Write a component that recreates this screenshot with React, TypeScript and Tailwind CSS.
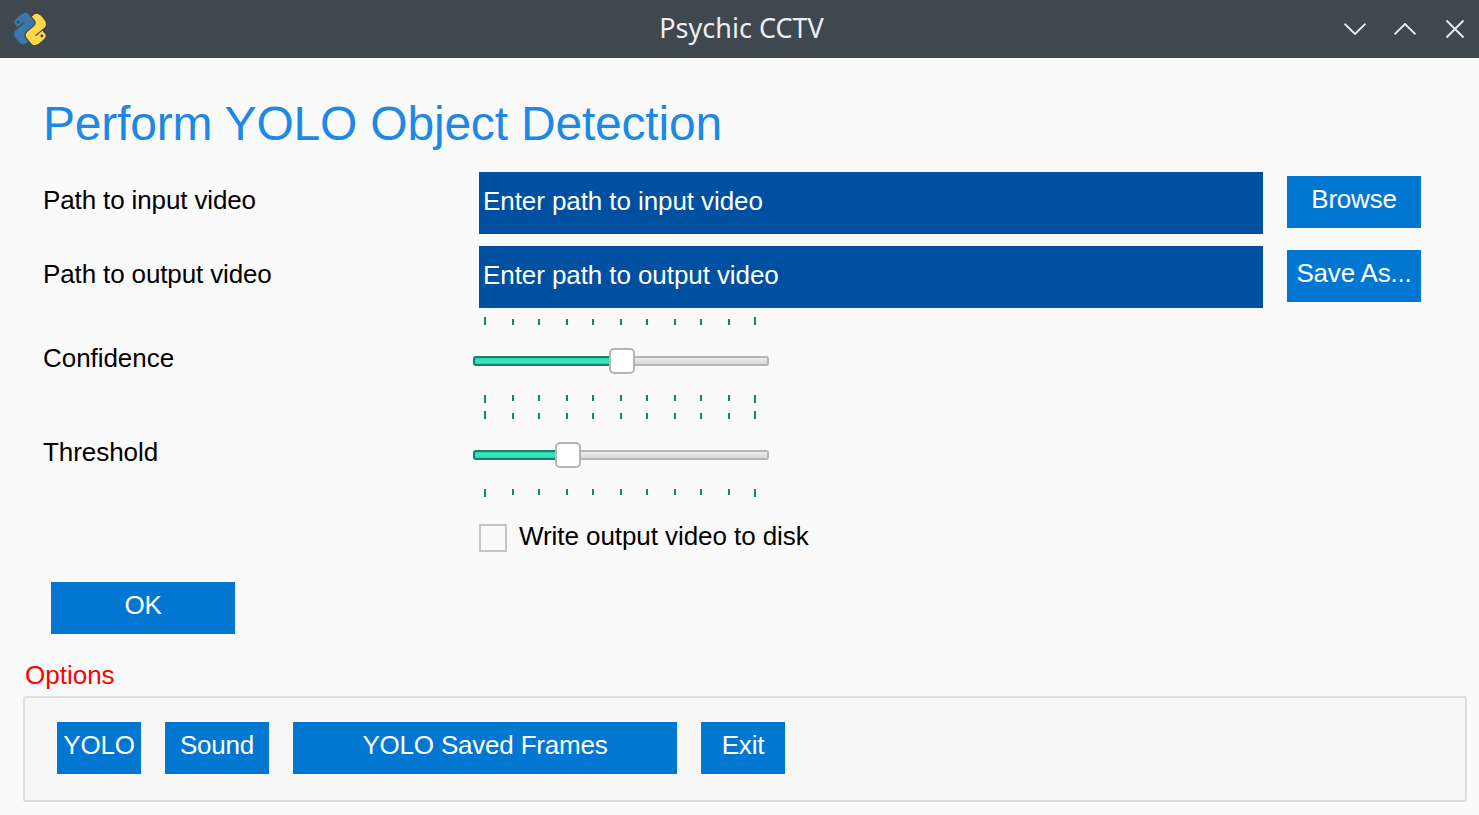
const ticks = [0, 1, 2, 3, 4, 5, 6, 7, 8, 9, 10];
const gapClass = ["ml-0", "ml-[26px]", "ml-[24px]"];

function Ticks({ className, align }: { className: string; align: "top" | "bottom" }) {
  return (
    <div className={`flex h-2 w-[272px] ${align === "top" ? "items-start" : "items-end"} ${className}`}>
      {ticks.map((t) => (
        <div
          key={t}
          className={`w-0.5 bg-[#0f8a6e] ${t === 0 || t === 10 ? "h-2" : "h-1.5"} ${
            t === 0 ? gapClass[0] : t % 2 === 1 ? gapClass[1] : gapClass[2]
          }`}
        />
      ))}
    </div>
  );
}

function Slider({ fill }: { fill: "a" | "b" }) {
  return (
    <div className="flex h-[26px] w-[296px] items-center">
      <div
        className={`h-2.5 rounded-l-[3px] border-2 border-r-0 border-[#17806b] bg-linear-to-b from-[#25d4ac] via-[#3ce9c0] to-[#25d4ac] ${
          fill === "a" ? "w-[136px]" : "w-[82px]"
        }`}
      />
      <div className="h-[26px] w-[26px] shrink-0 rounded-[5px] border-2 border-[#b5b5b5] bg-white" />
      <div className="h-2.5 flex-1 rounded-r-[3px] border-2 border-l-0 border-[#b5b5b5] bg-linear-to-b from-[#ececec] to-[#d9d9d9]" />
    </div>
  );
}

function Btn({ className, children }: { className: string; children: string }) {
  return (
    <button
      className={`flex h-[52px] justify-center bg-[#0277d2] pt-[5px] text-[26px] leading-[36px] tracking-[-0.2px] text-white ${className}`}
    >
      {children}
    </button>
  );
}

function PathRow({ label, placeholder, button, className }: { label: string; placeholder: string; button: string; className: string }) {
  return (
    <div className={`flex h-[62px] ${className}`}>
      <div className="-ml-px w-[436px] pt-[11px] leading-[34px] tracking-[-0.13px]">{label}</div>
      <div className="flex h-[62px] w-[784px] items-center bg-[#0050a2] pb-[3px] pl-1 tracking-[-0.08px] text-white">{placeholder}</div>
      <Btn className="ml-6 mt-1 w-[134px]">{button}</Btn>
    </div>
  );
}

function PythonLogo() {
  return (
    <svg viewBox="0 0 24 24" className="h-[34px] w-[34px] shrink-0 -rotate-[40deg]">
      <path
        fill="#3b77a8"
        fillRule="evenodd"
        d="M14.25.18l.9.2.73.26.59.3.45.32.34.34.25.34.16.33.1.3.04.26.02.2-.01.13V8.5l-.05.63-.13.55-.21.46-.26.38-.3.31-.33.25-.35.19-.35.14-.33.1-.3.07-.26.04-.21.02H8.77l-.69.05-.59.14-.5.22-.41.27-.33.32-.27.35-.2.36-.15.37-.1.35-.07.32-.04.27-.02.21v3.06H3.17l-.21-.03-.28-.07-.32-.12-.35-.18-.36-.26-.36-.36-.35-.46-.32-.59-.28-.73-.21-.88-.14-1.05-.05-1.23.06-1.22.16-1.04.24-.87.32-.71.36-.57.4-.44.42-.33.42-.24.4-.16.36-.1.32-.05.24-.01h.16l.06.01h8.16v-.83H6.18l-.01-2.75-.02-.37.05-.34.11-.31.17-.28.25-.26.31-.23.38-.2.44-.18.51-.15.58-.12.64-.1.71-.06.77-.04.84-.02 1.27.05zm-6.3 1.98l-.23.33-.08.41.08.41.23.34.33.22.41.09.41-.09.33-.22.23-.34.08-.41-.08-.41-.23-.33-.33-.22-.41-.09-.41.09z"
      />
      <path
        fill="#ffd84a"
        fillRule="evenodd"
        d="M21.04 6.11l.28.06.32.12.35.18.36.27.36.35.35.47.32.59.28.73.21.88.14 1.04.05 1.23-.06 1.23-.16 1.04-.24.86-.32.71-.36.57-.4.45-.42.33-.42.24-.4.16-.36.09-.32.05-.24.02-.16-.01h-8.22v.82h5.84l.01 2.76.02.36-.05.34-.11.31-.17.29-.25.25-.31.24-.38.2-.44.17-.51.15-.58.13-.64.09-.71.07-.77.04-.84.01-1.27-.04-1.07-.14-.9-.2-.73-.25-.59-.3-.45-.33-.34-.34-.25-.34-.16-.33-.1-.3-.04-.25-.02-.2.01-.13v-5.34l.05-.64.13-.54.21-.46.26-.38.3-.32.33-.24.35-.2.35-.14.33-.1.3-.06.26-.04.21-.02.13-.01h5.84l.69-.05.59-.14.5-.21.41-.28.33-.32.27-.35.2-.36.15-.36.1-.35.07-.32.04-.28.02-.21V6.07h2.09l.14.01zm-6.47 14.25l-.23.33-.08.41.08.41.23.33.33.23.41.08.41-.08.33-.23.23-.33.08-.41-.08-.41-.23-.33-.33-.23-.41-.08-.41.08z"
      />
    </svg>
  );
}

export default function App() {
  return (
    <div className="flex h-[815px] w-[1479px] flex-col overflow-hidden bg-[#fafafa] font-['Liberation_Sans',sans-serif] text-[26px] text-black">
      <header className="flex h-[58px] shrink-0 items-center bg-[#3f474f] pl-[13px] pr-[15px]">
        <PythonLogo />
        <div className="flex-1 pb-[3px] pl-[92px] text-center font-['Noto_Sans',sans-serif] text-[27px] leading-[34px] text-[#eceff1]">
          Psychic CCTV
        </div>
        <div className="flex items-center text-[#e8e8e8]">
          <svg viewBox="0 0 22 12" className="h-3 w-[22px]" fill="none" stroke="currentColor" strokeWidth="2">
            <path d="M0.5 0.7 L11 11 L21.5 0.7" />
          </svg>
          <svg viewBox="0 0 22 12" className="ml-[28px] h-3 w-[22px]" fill="none" stroke="currentColor" strokeWidth="2">
            <path d="M0.5 11.3 L11 1 L21.5 11.3" />
          </svg>
          <svg viewBox="0 0 18 18" className="ml-[30px] h-[18px] w-[18px]" fill="none" stroke="currentColor" strokeWidth="2">
            <path d="M0.5 0.5 L17.5 17.5 M17.5 0.5 L0.5 17.5" />
          </svg>
        </div>
      </header>

      <main className="flex flex-1 flex-col pl-11">
        <h1 className="-ml-px mt-[35px] h-[61px] text-[48px] leading-[62px] tracking-[-0.2px] text-[#1e88e5]">Perform YOLO Object Detection</h1>
        <PathRow className="mt-[18px]" label="Path to input video" placeholder="Enter path to input video" button="Browse" />
        <PathRow className="mt-3" label="Path to output video" placeholder="Enter path to output video" button="Save As..." />

        <div className="mt-[9px] flex">
          <div className="-ml-px w-[430px] pt-[23px] leading-[36px] tracking-[-0.05px]">Confidence</div>
          <div>
            <Ticks className="ml-[11px]" align="bottom" />
            <div className="mt-[23px]">
              <Slider fill="a" />
            </div>
            <Ticks className="ml-[11px] mt-[21px]" align="top" />
          </div>
        </div>
        <div className="mt-2 flex">
          <div className="-ml-px w-[430px] pt-[23px] leading-[36px] tracking-[-0.05px]">Threshold</div>
          <div>
            <Ticks className="ml-[11px]" align="bottom" />
            <div className="mt-[23px]">
              <Slider fill="b" />
            </div>
            <Ticks className="ml-[11px] mt-[21px]" align="top" />
          </div>
        </div>

        <div className="ml-[435px] mt-[27px] flex h-7 items-center">
          <div className="h-7 w-7 border-2 border-[#c4c4c4] bg-[#fafafa]" />
          <span className="ml-3 pb-1 leading-[34px] tracking-[-0.07px]">Write output video to disk</span>
        </div>

        <Btn className="ml-[7px] mt-[30px] w-[184px]">OK</Btn>

        <div className="-ml-[19px] mt-[23px] h-[37px] leading-[36px] text-[#ff0000]">Options</div>
        <div className="-ml-[21px] mt-[2px] flex h-[106px] w-[1444px] gap-6 rounded-[3px] border-2 border-[#dedede] bg-[#f7f7f7] pl-8 pt-6">
          <Btn className="w-[84px]">YOLO</Btn>
          <Btn className="w-[104px]">Sound</Btn>
          <Btn className="w-[384px]">YOLO Saved Frames</Btn>
          <Btn className="w-[84px]">Exit</Btn>
        </div>
      </main>
    </div>
  );
}
